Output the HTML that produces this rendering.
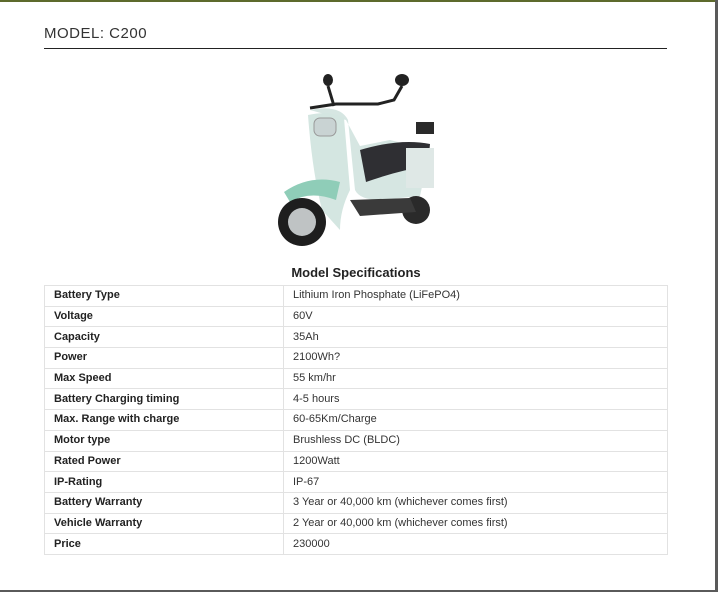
<!DOCTYPE html>
<html><head><style>
html,body{margin:0;padding:0;width:718px;height:592px;overflow:hidden;background:#5a5a5a;font-family:"Liberation Sans",sans-serif}
.frame{position:absolute;left:0;top:0;width:715px;height:590px;background:#fff;border-top:2px solid #5d6a2c;box-sizing:border-box}
h1{position:absolute;left:44px;top:23px;margin:0;font-size:15px;font-weight:normal;color:#333;letter-spacing:0.5px}
.rule{position:absolute;left:44px;top:46px;width:623px;height:1px;background:#222}
.title{position:absolute;left:0;width:712px;top:263px;text-align:center;font-size:13px;font-weight:bold;color:#222}
table{position:absolute;left:44px;top:283px;width:624px;border-collapse:collapse;font-size:11px;color:#333}
td{border:1px solid #e2e2e2;height:19.7px;padding:0 0 0 9px;line-height:19px}
td:first-child{font-weight:bold;color:#222;width:229px}
</style></head><body>
<div class="frame">
<h1>MODEL: C200</h1>
<div class="rule"></div>
<svg style="position:absolute;left:270px;top:68px" width="180" height="180" viewBox="0 0 180 180">
<ellipse cx="58" cy="10" rx="5" ry="6" fill="#222"/>
<ellipse cx="132" cy="10" rx="7" ry="6" fill="#222"/>
<path d="M58 16 L64 36 M132 16 L124 30 L108 34 L66 34 L40 38" stroke="#222" stroke-width="3" fill="none"/>
<path d="M146 52 h18 v12 h-18z" fill="#2a2a2a"/>
<path d="M40 40 Q70 34 78 50 L85 120 Q90 130 110 130 L150 126 L160 80 L120 70 L90 76 L76 50 Z" fill="#d6e6e2"/>
<path d="M38 45 Q60 40 74 48 L80 120 Q70 140 70 160 L52 140 Q42 100 38 45Z" fill="#d4e6e1"/>
<rect x="44" y="48" width="22" height="18" rx="6" fill="#c9d3d3" stroke="#999"/>
<path d="M14 122 Q40 104 70 112 L66 130 Q40 120 20 132Z" fill="#8fcdb8"/>
<path d="M90 80 Q130 68 160 74 L158 96 Q130 100 96 112Z" fill="#2f2f33"/>
<path d="M136 78 h28 v40 h-28z" fill="#dfe8e6"/>
<circle cx="32" cy="152" r="24" fill="#1e1e1e"/>
<circle cx="32" cy="152" r="14" fill="#bfc3c4"/>
<circle cx="146" cy="140" r="14" fill="#2a2a2a"/>
<path d="M80 130 L140 128 L146 142 L90 146Z" fill="#3a3a3a"/>
</svg>
<div class="title">Model Specifications</div>
<table>
<tr><td>Battery Type</td><td>Lithium Iron Phosphate (LiFePO4)</td></tr>
<tr><td>Voltage</td><td>60V</td></tr>
<tr><td>Capacity</td><td>35Ah</td></tr>
<tr><td>Power</td><td>2100Wh?</td></tr>
<tr><td>Max Speed</td><td>55 km/hr</td></tr>
<tr><td>Battery Charging timing</td><td>4-5 hours</td></tr>
<tr><td>Max. Range with charge</td><td>60-65Km/Charge</td></tr>
<tr><td>Motor type</td><td>Brushless DC (BLDC)</td></tr>
<tr><td>Rated Power</td><td>1200Watt</td></tr>
<tr><td>IP-Rating</td><td>IP-67</td></tr>
<tr><td>Battery Warranty</td><td>3 Year or 40,000 km (whichever comes first)</td></tr>
<tr><td>Vehicle Warranty</td><td>2 Year or 40,000 km (whichever comes first)</td></tr>
<tr><td>Price</td><td>230000</td></tr>
</table>
</div>
</body></html>
